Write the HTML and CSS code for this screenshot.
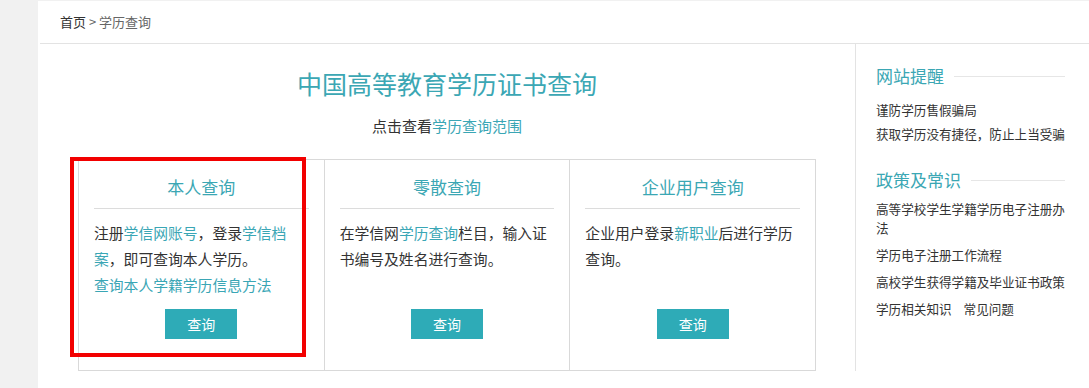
FILE: index.html
```html
<!DOCTYPE html>
<html lang="zh-CN">
<head>
<meta charset="utf-8">
<title>学历查询</title>
<link rel="stylesheet" href="styles.css">
</head>
<body>
<div class="page">
  <div class="crumbs"><a class="home">首页</a> &gt; 学历查询</div>
  <div class="content">
    <div class="main">
      <h1 class="title">中国高等教育学历证书查询</h1>
      <p class="sub">点击查看<a class="lnk">学历查询范围</a></p>
      <div class="cards">
        <div class="card">
          <h2 class="card-title">本人查询</h2>
          <div class="card-body">
            注册<a class="lnk">学信网账号</a>，登录<a class="lnk">学信档案</a>，即可查询本人学历。<br>
            <a class="lnk">查询本人学籍学历信息方法</a>
          </div>
          <a class="btn">查询</a>
        </div>
        <div class="card">
          <h2 class="card-title">零散查询</h2>
          <div class="card-body">
            在学信网<a class="lnk">学历查询</a>栏目，输入证书编号及姓名进行查询。
          </div>
          <a class="btn">查询</a>
        </div>
        <div class="card">
          <h2 class="card-title">企业用户查询</h2>
          <div class="card-body">
            企业用户登录<a class="lnk">新职业</a>后进行学历查询。
          </div>
          <a class="btn">查询</a>
        </div>
        <div class="highlight"></div>
      </div>
    </div>
    <div class="side">
      <div class="side-head"><span>网站提醒</span><i class="rule"></i></div>
      <ul class="side-list">
        <li>谨防学历售假骗局</li>
        <li>获取学历没有捷径，防止上当受骗</li>
      </ul>
      <div class="side-head second"><span>政策及常识</span><i class="rule"></i></div>
      <ul class="side-list wide">
        <li>高等学校学生学籍学历电子注册办法</li>
        <li>学历电子注册工作流程</li>
        <li>高校学生获得学籍及毕业证书政策</li>
        <li><span class="gap">学历相关知识</span>常见问题</li>
      </ul>
    </div>
  </div>
</div>
</body>
</html>
```

FILE: styles.css
```css
html, body {
  margin: 0;
  padding: 0;
}
body {
  background: #f1f1f1;
  font-family: "Noto Sans CJK SC", "Microsoft YaHei", sans-serif;
  color: #333;
  overflow: hidden;
  height: 388px;
}
.page {
  margin: 1px 0 0 38px;
  width: 1080px;
  height: 400px;
  background: #fff;
}
.crumbs {
  height: 42px;
  line-height: 42px;
  font-size: 13px;
  color: #666;
  border-bottom: 1px solid #e3e3e3;
  margin-left: 2px;
  padding-left: 20px;
}
.home {
  color: #333;
}
.content {
  display: flex;
}
.main {
  width: 817px;
  padding: 0 39px 0 40px;
  box-sizing: border-box;
}
.title {
  margin: 24px 0 0;
  font-size: 25px;
  font-weight: normal;
  line-height: 30px;
  text-align: center;
  color: #3ba7b4;
}
.sub {
  margin: 18px 0 0;
  font-size: 15px;
  line-height: 20px;
  text-align: center;
  color: #333;
}
.lnk {
  color: #3aa6b5;
}
.cards {
  position: relative;
  margin-top: 23px;
  display: flex;
  border: 1px solid #d9d9d9;
}
.card {
  flex: 1;
  display: flex;
  flex-direction: column;
  padding: 0 15px 31px;
}
.card + .card {
  border-left: 1px solid #d9d9d9;
}
.card-title {
  margin: 0;
  padding: 12px 0 6px;
  font-size: 17px;
  font-weight: normal;
  line-height: 30px;
  text-align: center;
  color: #3ba7b4;
  border-bottom: 1px solid #dcdcdc;
}
.card-body {
  margin-top: 11px;
  min-height: 78px;
  font-size: 14.8px;
  line-height: 26px;
  color: #333;
}
.btn {
  display: block;
  width: 72px;
  height: 30px;
  margin: 11px auto 0;
  line-height: 30px;
  text-align: center;
  font-size: 14px;
  color: #fff;
  background: #2eabb7;
}
.highlight {
  position: absolute;
  left: -9px;
  top: -3px;
  width: 228px;
  height: 192px;
  border: 4px solid #f20000;
}
.side {
  flex: 1;
  border-left: 1px solid #e3e3e3;
  padding: 20px 0 0 20px;
}
.side-head {
  display: flex;
  align-items: center;
  width: 189px;
  font-size: 17px;
  line-height: 24px;
  color: #3ba7b4;
  margin-bottom: 12px;
}
.side-head.second {
  margin-top: 25px;
  margin-bottom: 7px;
}
.rule {
  flex: 1;
  margin-left: 10px;
  border-top: 1px solid #e6e6e6;
}
.side-list {
  list-style: none;
  margin: 0;
  padding: 0;
  width: 196px;
  font-size: 12.6px;
  line-height: 19px;
  color: #333;
}
.side-list li {
  margin-bottom: 5px;
}
.side-list.wide li {
  margin-bottom: 8px;
}
.gap {
  margin-right: 12px;
}
```
